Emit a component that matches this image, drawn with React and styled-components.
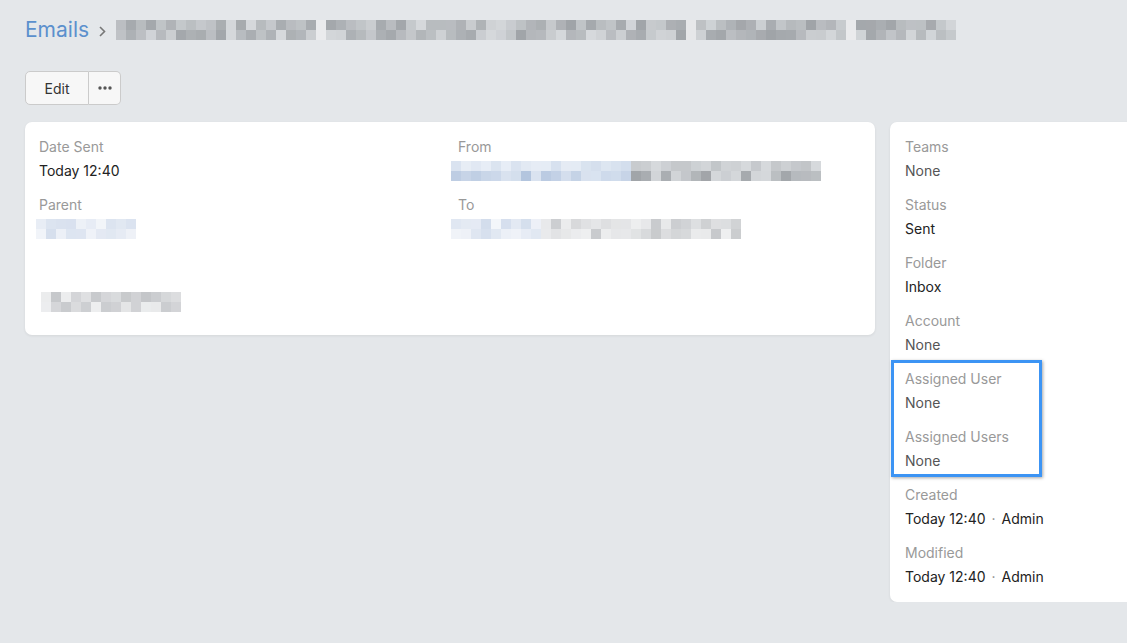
import React from "react";
import styled, { createGlobalStyle } from "styled-components";

const Global = createGlobalStyle`
  html, body { margin: 0; padding: 0; overflow: hidden; }
  body {
    background: #e4e7ea;
    font-family: Inter, "Noto Sans", "Liberation Sans", sans-serif;
    font-size: 14px;
    color: #222;
  }
`;

const Page = styled.div`
  padding: 16px 0 0 25px;
  width: 1140px;
`;

const Breadcrumb = styled.div`
  display: flex;
  align-items: center;
  height: 28px;
`;

const Crumb = styled.span`
  font-size: 21px;
  color: #5b90cd;
  line-height: 28px;
`;

const Chevron = styled.svg`
  margin: 2px 10px 0 10px;
  flex: none;
`;

const Toolbar = styled.div`
  display: flex;
  margin-top: 27px;
`;

const Button = styled.button`
  height: 34px;
  width: ${(p) => p.$w}px;
  display: flex;
  align-items: center;
  justify-content: center;
  background: #f7f7f7;
  border: 1px solid #cbcbcb;
  color: #333;
  font-family: inherit;
  font-size: 14px;
  padding: 0;
  border-radius: ${(p) => (p.$first ? "5px 0 0 5px" : "0 5px 5px 0")};
  border-left-width: ${(p) => (p.$first ? "1px" : "0")};
`;

const Layout = styled.div`
  display: flex;
  align-items: flex-start;
  gap: 15px;
  margin-top: 17px;
`;

const Card = styled.div`
  background: #fff;
  border-radius: 7px;
  box-shadow: 0 1px 3px rgba(0, 0, 0, 0.07);
  box-sizing: border-box;
  width: ${(p) => p.$w}px;
  padding: ${(p) => p.$pad};
`;

const Grid = styled.div`
  display: grid;
  grid-template-columns: 1fr 1fr;
  column-gap: 16px;
  row-gap: 14px;
`;

const Stack = styled.div`
  display: flex;
  flex-direction: column;
  gap: 14px;
`;

const Field = styled.div`
  display: flex;
  flex-direction: column;
`;

const Label = styled.div`
  color: #999;
  line-height: 20px;
`;

const Value = styled.div`
  margin-top: 4px;
  line-height: 20px;
  height: 20px;
  color: ${(p) => (p.$muted ? "#555" : "#222")};
  display: flex;
  align-items: center;
  white-space: nowrap;
`;

const Dot = styled.span`
  color: #888;
  margin: 0 6px;
`;

const Body = styled.div`
  padding-top: 53px;
  height: 20px;
`;

const Highlight = styled.div`
  position: relative;
  display: flex;
  flex-direction: column;
  gap: 14px;
  &::before {
    content: "";
    position: absolute;
    top: -9px;
    bottom: -6px;
    left: -14px;
    width: 151px;
    box-sizing: border-box;
    border: 3px solid #3c94f4;
    box-shadow: 1px 1px 3px rgba(0, 0, 0, 0.35);
    pointer-events: none;
  }
`;

const MosaicSvg = styled.svg`
  display: block;
  flex: none;
  margin-left: ${(p) => p.$dx || 0}px;
`;

function rng(seed) {
  let s = seed;
  return () => {
    s = (s * 9301 + 49297) % 233280;
    return s / 233280;
  };
}

function mix(a, b, t) {
  return Math.round(a + (b - a) * t);
}

const palettes = {
  gray: [[160, 164, 168], [215, 218, 221]],
  lightgray: [[195, 197, 200], [240, 241, 242]],
  blue: [[178, 196, 222], [232, 238, 246]],
  lightblue: [[210, 220, 236], [244, 246, 250]],
};

function Mosaic({ segments, rows = 2, seed = 1, dx, topLight }) {
  const r = rng(seed);
  const total = segments.reduce((a, s) => a + s.n, 0);
  const rects = [];
  let x = 0;
  segments.forEach((seg) => {
    for (let i = 0; i < seg.n; i++) {
      for (let y = 0; y < rows; y++) {
        if (seg.gap) {
          const v = mix(230, 240, r());
          rects.push(<rect key={`${x}-${y}`} x={x * 10} y={y * 10} width="10" height="10" fill={`rgb(${v},${v + 1},${v + 3})`} />);
          continue;
        }
        const [lo, hi] = palettes[seg.p];
        let t = r();
        if (topLight && y === 0) t = 0.6 + t * 0.4;
        const c = `rgb(${mix(lo[0], hi[0], t)},${mix(lo[1], hi[1], t)},${mix(lo[2], hi[2], t)})`;
        rects.push(<rect key={`${x}-${y}`} x={x * 10} y={y * 10} width="10" height="10" fill={c} />);
      }
      x++;
    }
  });
  return (
    <MosaicSvg $dx={dx} width={total * 10} height={rows * 10} viewBox={`0 0 ${total * 10} ${rows * 10}`}>
      {rects}
    </MosaicSvg>
  );
}

function Dots() {
  return (
    <svg width="14" height="4" viewBox="0 0 14 4">
      <circle cx="2" cy="2" r="1.7" fill="#555" />
      <circle cx="7" cy="2" r="1.7" fill="#555" />
      <circle cx="12" cy="2" r="1.7" fill="#555" />
    </svg>
  );
}

const sideFields = [
  ["Teams", "None", true],
  ["Status", "Sent", false],
  ["Folder", "Inbox", false],
  ["Account", "None", true],
];

export default function App() {
  return (
    <Page>
      <Global />
      <Breadcrumb>
        <Crumb>Emails</Crumb>
        <Chevron width="7" height="11" viewBox="0 0 7 11">
          <path d="M1 1l4.5 4.5L1 10" fill="none" stroke="#777" strokeWidth="1.6" />
        </Chevron>
        <Mosaic
          seed={7}
          segments={[
            { p: "gray", n: 20 },
            { gap: true, n: 1 },
            { p: "gray", n: 36 },
            { gap: true, n: 1 },
            { p: "gray", n: 15 },
            { gap: true, n: 1 },
            { p: "gray", n: 10 },
          ]}
        />
      </Breadcrumb>
      <Toolbar>
        <Button $first $w={64}>Edit</Button>
        <Button $w={32}><Dots /></Button>
      </Toolbar>
      <Layout>
        <Card $w={850} $pad="15px 14px 23px 14px">
          <Grid>
            <Field>
              <Label>Date Sent</Label>
              <Value>Today 12:40</Value>
            </Field>
            <Field>
              <Label>From</Label>
              <Value>
                <Mosaic dx={-7} seed={3} topLight segments={[{ p: "blue", n: 18 }, { p: "gray", n: 19 }]} />
              </Value>
            </Field>
            <Field>
              <Label>Parent</Label>
              <Value>
                <Mosaic dx={-3} seed={11} segments={[{ p: "lightblue", n: 10 }]} />
              </Value>
            </Field>
            <Field>
              <Label>To</Label>
              <Value>
                <Mosaic dx={-7} seed={5} segments={[{ p: "lightblue", n: 9 }, { gap: true, n: 1 }, { p: "lightgray", n: 19 }]} />
              </Value>
            </Field>
          </Grid>
          <Body>
            <Mosaic dx={2} seed={17} segments={[{ p: "lightgray", n: 14 }]} />
          </Body>
        </Card>
        <Card $w={262} $pad="15px 15px 15px 15px">
          <Stack>
            {sideFields.map(([l, v, m]) => (
              <Field key={l}>
                <Label>{l}</Label>
                <Value $muted={m}>{v}</Value>
              </Field>
            ))}
            <Highlight>
              <Field>
                <Label>Assigned User</Label>
                <Value $muted>None</Value>
              </Field>
              <Field>
                <Label>Assigned Users</Label>
                <Value $muted>None</Value>
              </Field>
            </Highlight>
            <Field>
              <Label>Created</Label>
              <Value>Today 12:40<Dot>·</Dot>Admin</Value>
            </Field>
            <Field>
              <Label>Modified</Label>
              <Value>Today 12:40<Dot>·</Dot>Admin</Value>
            </Field>
          </Stack>
        </Card>
      </Layout>
    </Page>
  );
}
